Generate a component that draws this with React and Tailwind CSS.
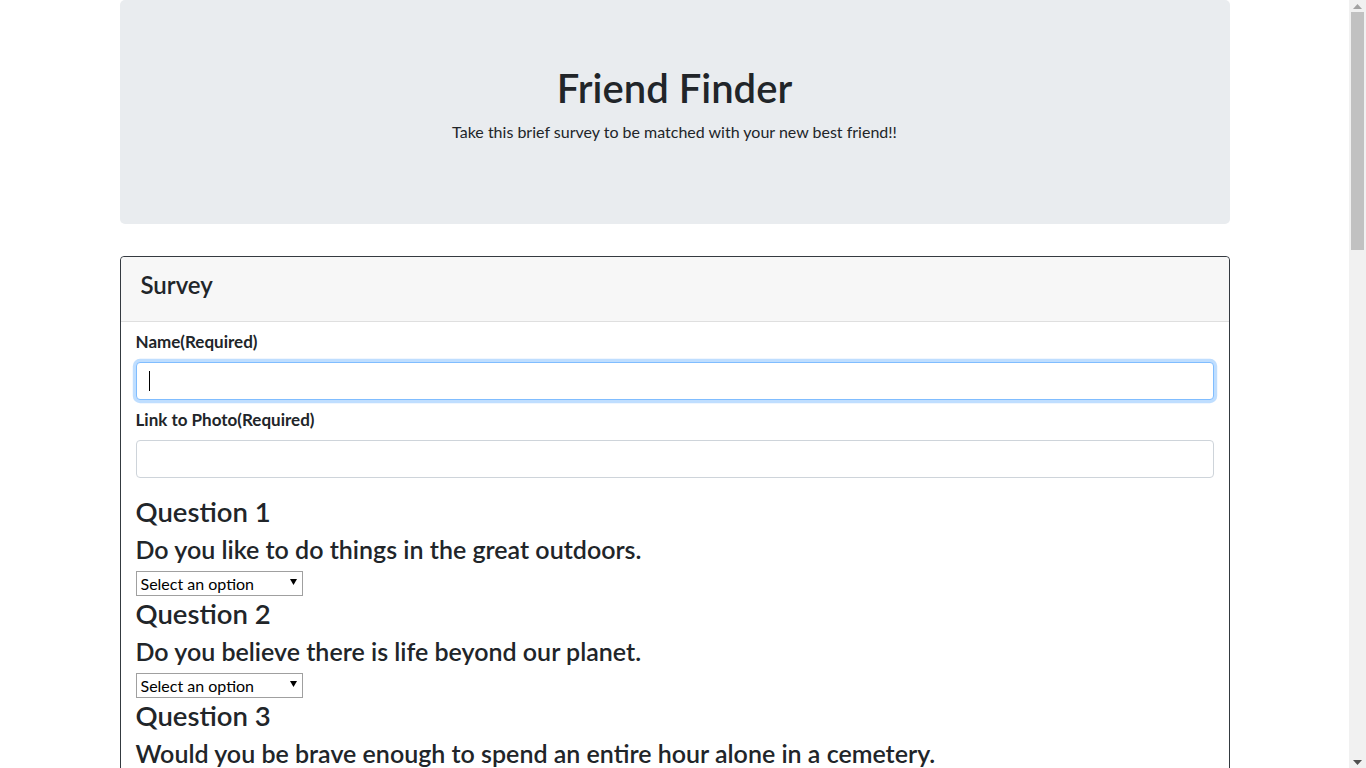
import React from "react";

const questions = [
  "Do you like to do things in the great outdoors.",
  "Do you believe there is life beyond our planet.",
  "Would you be brave enough to spend an entire hour alone in a cemetery.",
  "Do you enjoy going to concerts and live shows.",
  "Are you a morning person.",
];

function FakeSelect() {
  return (
    <div className="mb-px flex h-[25px] w-[167px] items-center justify-between border border-[#a0a0a0] bg-white pl-[4px] pr-[5px] text-[16px] leading-none text-black">
      <span>Select an option</span>
      <svg width="7" height="6" viewBox="0 0 7 6" className="mb-[3px]">
        <path d="M0 0 L7 0 L3.5 6 Z" fill="#000" />
      </svg>
    </div>
  );
}

function Scrollbar() {
  return (
    <div className="flex h-full w-[17px] shrink-0 flex-col items-center bg-[#f1f1f1]">
      <div className="flex h-[12px] w-full items-center justify-center">
        <svg width="9" height="5" viewBox="0 0 9 5">
          <path d="M0 5 L4.5 0 L9 5 Z" fill="#a3a3a3" />
        </svg>
      </div>
      <div className="h-[238px] w-[13px] bg-[#c1c1c1]" />
      <div className="flex-1" />
      <div className="flex h-[12px] w-full items-center justify-center">
        <svg width="9" height="5" viewBox="0 0 9 5">
          <path d="M0 0 L9 0 L4.5 5 Z" fill="#505050" />
        </svg>
      </div>
    </div>
  );
}

export default function App() {
  return (
    <div className="flex h-[768px] w-full overflow-hidden bg-white font-['Lato',sans-serif] text-[#212529]">
      <div className="min-w-0 flex-1 overflow-hidden">
        <div className="mx-auto w-[1110px]">
          <div className="mb-[32px] flex h-[224px] flex-col items-center rounded-[5px] bg-[#e9ecef] pt-[64px]">
            <h1 className="mb-[8px] text-[40px] font-semibold leading-[48px]">Friend Finder</h1>
            <p className="text-[16px] leading-[24px]">
              Take this brief survey to be matched with your new best friend!!
            </p>
          </div>

          <div className="rounded-[4px] border border-[#343a40]">
            <div className="h-[65px] rounded-t-[4px] border-b border-[#dfdfdf] bg-[#f7f7f7] px-[20px] pt-[13px]">
              <h4 className="text-[24px] font-semibold leading-[29px]">Survey</h4>
            </div>
            <div className="px-[15px] pt-[8px]">
              <div className="mb-[8px]">
                <label className="mb-[8px] block text-[17px] font-bold leading-[24px]">Name(Required)</label>
                <div className="flex h-[38px] items-center rounded-[4px] border border-[#80bdff] bg-white px-[12px] shadow-[0_0_0_3.2px_rgba(0,123,255,0.25)]">
                  <div className="h-[20px] w-px bg-black" />
                </div>
              </div>
              <div className="mb-[17px]">
                <label className="mb-[8px] block text-[17px] font-bold leading-[24px]">Link to Photo(Required)</label>
                <div className="h-[38px] rounded-[4px] border border-[#ced4da] bg-white" />
              </div>
              {questions.map((q, i) => (
                <div key={i}>
                  <h3 className="mb-[6px] text-[27.5px] font-semibold leading-[34px]">{`Question ${i + 1}`}</h3>
                  <h4 className="mb-[7px] text-[25px] font-semibold leading-[29px]">{q}</h4>
                  <FakeSelect />
                </div>
              ))}
            </div>
          </div>
        </div>
      </div>
      <Scrollbar />
    </div>
  );
}
